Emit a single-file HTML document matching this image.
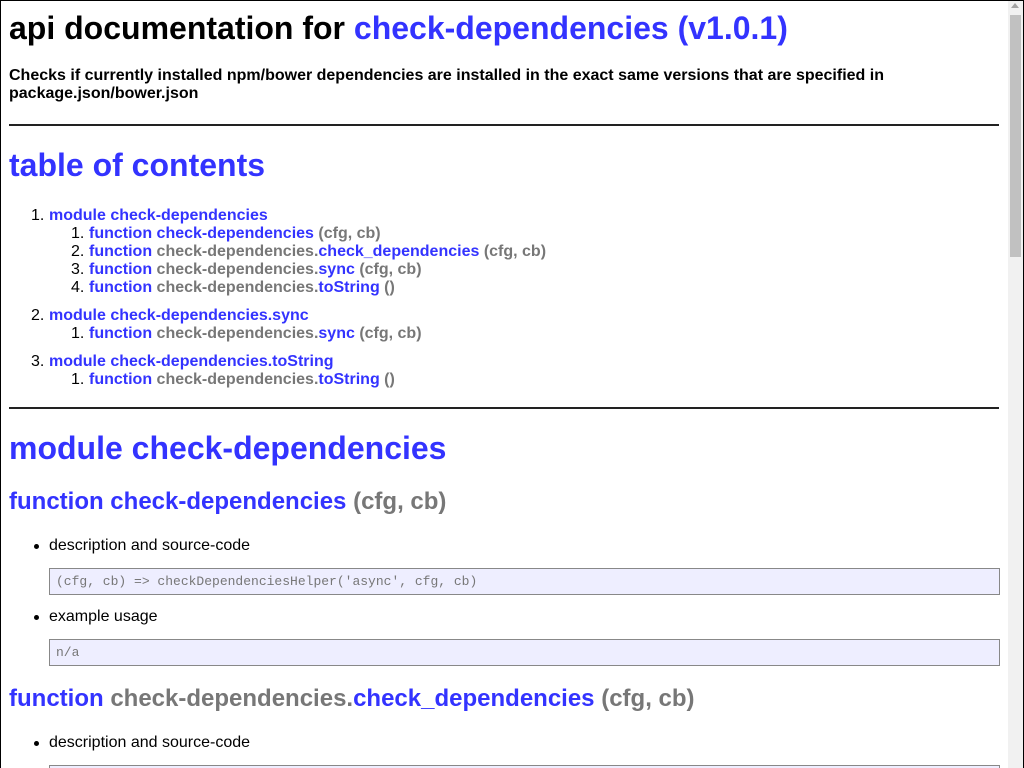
<!DOCTYPE html>
<html><head><meta charset="utf-8"><style>
html,body{margin:0;padding:0;width:1024px;height:768px;overflow:hidden;background:#fff;font-family:"Liberation Sans",sans-serif;color:#000}
.frame{position:absolute;left:0;top:0;width:1022px;height:767px;border:1px solid #000;border-bottom:0}
.a{position:absolute;white-space:nowrap}
.b{color:#33f}.g{color:#777}
.h1{font-size:32px;font-weight:bold;line-height:36px}
.h2{font-size:24px;font-weight:bold;line-height:28px}
.h4{font-size:16px;font-weight:bold;line-height:18px}
.t{font-size:16px;line-height:18px}
.bold{font-weight:bold}
hr{position:absolute;left:9px;width:990px;margin:0;border:0;border-top:2px solid #222;height:0}
.pre{position:absolute;left:49px;background:#eef;border:1px solid #888;font-family:"Liberation Mono",monospace;font-size:13px;line-height:25px;color:#777;padding-left:6px;box-sizing:border-box;width:951px;height:27px}
.dot{position:absolute;width:5px;height:5px;border-radius:3px;background:#000}
.sb{position:absolute;left:1008px;top:1px;width:15px;height:767px;background:#f1f1f1}
.th{position:absolute;left:1010px;top:15px;width:11px;height:242px;background:#c1c1c1}
</style></head><body>
<div class="frame"></div>
<div class="a h1" style="left:9px;top:10px">api documentation for <span class="b">check-dependencies (v1.0.1)</span></div>
<div class="a h4" style="left:9px;top:67px">Checks if currently installed npm/bower dependencies are installed in the exact same versions that are specified in<br>package.json/bower.json</div>
<hr style="top:124px">
<div class="a h1 b" style="left:9px;top:147px">table of contents</div>

<div class="a t" style="left:31px;top:207px">1.</div><div class="a t bold b" style="left:49px;top:207px">module check-dependencies</div>
<div class="a t" style="left:71px;top:225px">1.</div><div class="a t bold" style="left:89px;top:225px"><span class="b">function check-dependencies</span> <span class="g">(cfg, cb)</span></div>
<div class="a t" style="left:71px;top:243px">2.</div><div class="a t bold" style="left:89px;top:243px"><span class="b">function</span> <span class="g">check-dependencies.</span><span class="b">check_dependencies</span> <span class="g">(cfg, cb)</span></div>
<div class="a t" style="left:71px;top:261px">3.</div><div class="a t bold" style="left:89px;top:261px"><span class="b">function</span> <span class="g">check-dependencies.</span><span class="b">sync</span> <span class="g">(cfg, cb)</span></div>
<div class="a t" style="left:71px;top:279px">4.</div><div class="a t bold" style="left:89px;top:279px"><span class="b">function</span> <span class="g">check-dependencies.</span><span class="b">toString</span> <span class="g">()</span></div>
<div class="a t" style="left:31px;top:307px">2.</div><div class="a t bold b" style="left:49px;top:307px">module check-dependencies.sync</div>
<div class="a t" style="left:71px;top:325px">1.</div><div class="a t bold" style="left:89px;top:325px"><span class="b">function</span> <span class="g">check-dependencies.</span><span class="b">sync</span> <span class="g">(cfg, cb)</span></div>
<div class="a t" style="left:31px;top:353px">3.</div><div class="a t bold b" style="left:49px;top:353px">module check-dependencies.toString</div>
<div class="a t" style="left:71px;top:371px">1.</div><div class="a t bold" style="left:89px;top:371px"><span class="b">function</span> <span class="g">check-dependencies.</span><span class="b">toString</span> <span class="g">()</span></div>

<hr style="top:407px">
<div class="a h1 b" style="left:9px;top:430px">module check-dependencies</div>
<div class="a h2" style="left:9px;top:488px"><span class="b">function check-dependencies</span> <span class="g">(cfg, cb)</span></div>
<div class="dot" style="left:34px;top:544px"></div><div class="a t" style="left:49px;top:537px">description and source-code</div>
<div class="pre" style="top:568px">(cfg, cb) =&gt; checkDependenciesHelper('async', cfg, cb)</div>
<div class="dot" style="left:34px;top:615px"></div><div class="a t" style="left:49px;top:608px">example usage</div>
<div class="pre" style="top:639px">n/a</div>
<div class="a h2" style="left:9px;top:685px"><span class="b">function</span> <span class="g">check-dependencies.</span><span class="b">check_dependencies</span> <span class="g">(cfg, cb)</span></div>
<div class="dot" style="left:34px;top:741px"></div><div class="a t" style="left:49px;top:734px">description and source-code</div>
<div class="pre" style="top:765px;height:3px;border-bottom:0"></div>
<div class="sb"></div><div class="th"></div>
<div class="a" style="left:1011px;top:3px;width:0;height:0;border-left:4px solid transparent;border-right:4px solid transparent;border-bottom:5px solid #a3a3a3"></div>
</body></html>
